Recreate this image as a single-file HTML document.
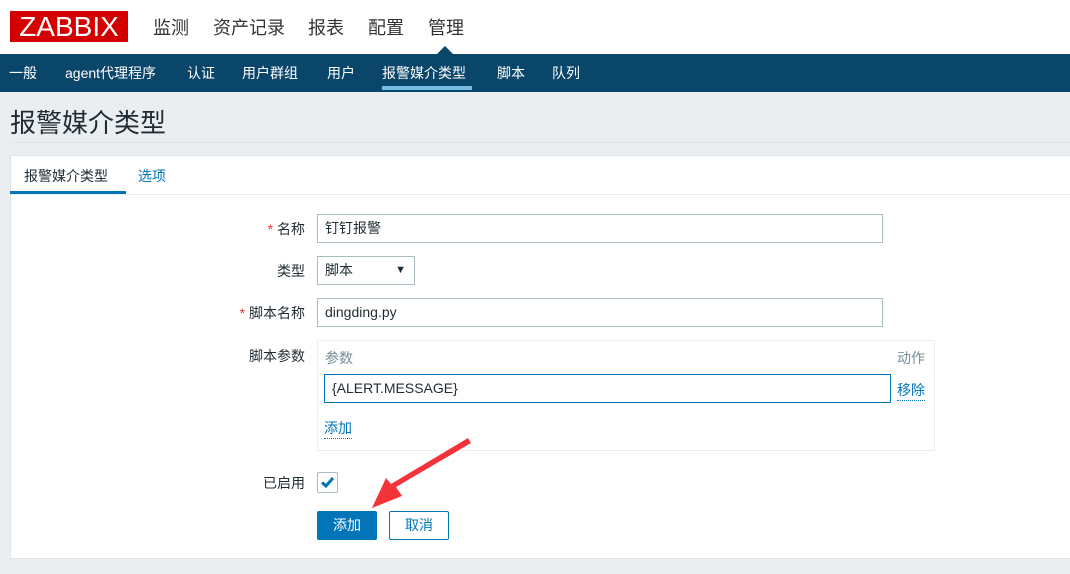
<!DOCTYPE html>
<html><head><meta charset="utf-8"><style>
*{box-sizing:border-box;margin:0;padding:0}
body{width:1070px;height:574px;overflow:hidden;background:#ebeef0;font-family:"Liberation Sans","Noto Sans CJK SC",sans-serif;font-size:14px;color:#1f2c33;position:relative}
.a{position:absolute}
.hdr{left:0;top:0;width:1070px;height:54px;background:#fff}
.logo{left:10px;top:11px;width:118px;height:31px;background:#d40000;color:#fff;font-size:28px;line-height:31px;text-align:center;letter-spacing:0px}
.top{top:14px;font-size:18px;color:#333}
.nav{left:0;top:54px;width:1070px;height:38px;background:#0a466a}
.nav span{position:absolute;top:9px;color:#fff;font-size:14px}
.lbl{text-align:right;width:200px;left:105px}
.inp{border:1px solid #acbbc2;background:#fff;height:29px;padding-left:7px;line-height:27px}
.star{color:#e33734}
.lnk{color:#0275b8;border-bottom:1px dotted #0275b8}
</style></head><body>
<div class="a hdr"></div>
<div class="a logo">ZABBIX</div>
<div class="a top" style="left:153px">监测</div>
<div class="a top" style="left:213px">资产记录</div>
<div class="a top" style="left:308px">报表</div>
<div class="a top" style="left:368px">配置</div>
<div class="a top" style="left:428px">管理</div>
<div class="a nav">
<span style="left:9px">一般</span><span style="left:65px">agent代理程序</span><span style="left:187px">认证</span><span style="left:242px">用户群组</span><span style="left:327px">用户</span><span style="left:382px">报警媒介类型</span><span style="left:497px">脚本</span><span style="left:552px">队列</span>
</div>
<div class="a" style="left:382px;top:86px;width:90px;height:4px;background:#75bce8"></div>
<div class="a" style="left:437px;top:46px;width:0;height:0;border-left:8px solid transparent;border-right:8px solid transparent;border-bottom:8px solid #0a466a"></div>
<div class="a" style="left:10px;top:103px;font-size:26px;color:#1f2c33">报警媒介类型</div>
<div class="a" style="left:10px;top:142px;width:1060px;height:1px;background:#dfe4e7"></div>
<div class="a" style="left:10px;top:155px;width:1062px;height:404px;background:#fff;border:1px solid #dfe4e7"></div>
<div class="a" style="left:11px;top:194px;width:1060px;height:1px;background:#ebeef0"></div>
<div class="a" style="left:24px;top:166px">报警媒介类型</div>
<div class="a" style="left:10px;top:191px;width:116px;height:3px;background:#0275b8"></div>
<div class="a" style="left:138px;top:166px;color:#0275b8">选项</div>

<div class="a lbl" style="top:219px"><span class="star">*</span> 名称</div>
<div class="a inp" style="left:317px;top:214px;width:566px">钉钉报警</div>
<div class="a lbl" style="top:261px">类型</div>
<div class="a inp" style="left:317px;top:256px;width:98px">脚本<span style="position:absolute;right:8px;font-size:11px">▼</span></div>
<div class="a lbl" style="top:303px"><span class="star">*</span> 脚本名称</div>
<div class="a inp" style="left:317px;top:298px;width:566px">dingding.py</div>
<div class="a lbl" style="top:346px">脚本参数</div>
<div class="a" style="left:317px;top:340px;width:618px;height:111px;border:1px solid #ebeef0"></div>
<div class="a" style="left:325px;top:348px;color:#768d99">参数</div>
<div class="a" style="left:897px;top:348px;color:#768d99">动作</div>
<div class="a inp" style="left:324px;top:374px;width:567px;border-color:#0275b8">{ALERT.MESSAGE}</div>
<div class="a lnk" style="left:897px;top:380px">移除</div>
<div class="a lnk" style="left:324px;top:418px">添加</div>
<div class="a lbl" style="top:473px">已启用</div>
<div class="a" style="left:317px;top:472px;width:21px;height:21px;border:1px solid #acbbc2;border-radius:2px"><svg width="19" height="19" viewBox="0 0 19 19" style="position:absolute;left:0;top:0"><path d="M4 9.5 L8 13 L15 5" stroke="#0275b8" stroke-width="3" fill="none"/></svg></div>
<div class="a" style="left:317px;top:511px;width:60px;height:29px;background:#0275b8;border-radius:2px;color:#fff;text-align:center;line-height:29px">添加</div>
<div class="a" style="left:389px;top:511px;width:60px;height:29px;border:1px solid #0275b8;border-radius:2px;color:#0275b8;text-align:center;line-height:27px">取消</div>
<svg class="a" style="left:0;top:0" width="1070" height="574"><path d="M471 443 L396 487 L402 496 L372 508 L386 478 L391 484 L468 438 Z" fill="#f2333a"/></svg>
</body></html>
